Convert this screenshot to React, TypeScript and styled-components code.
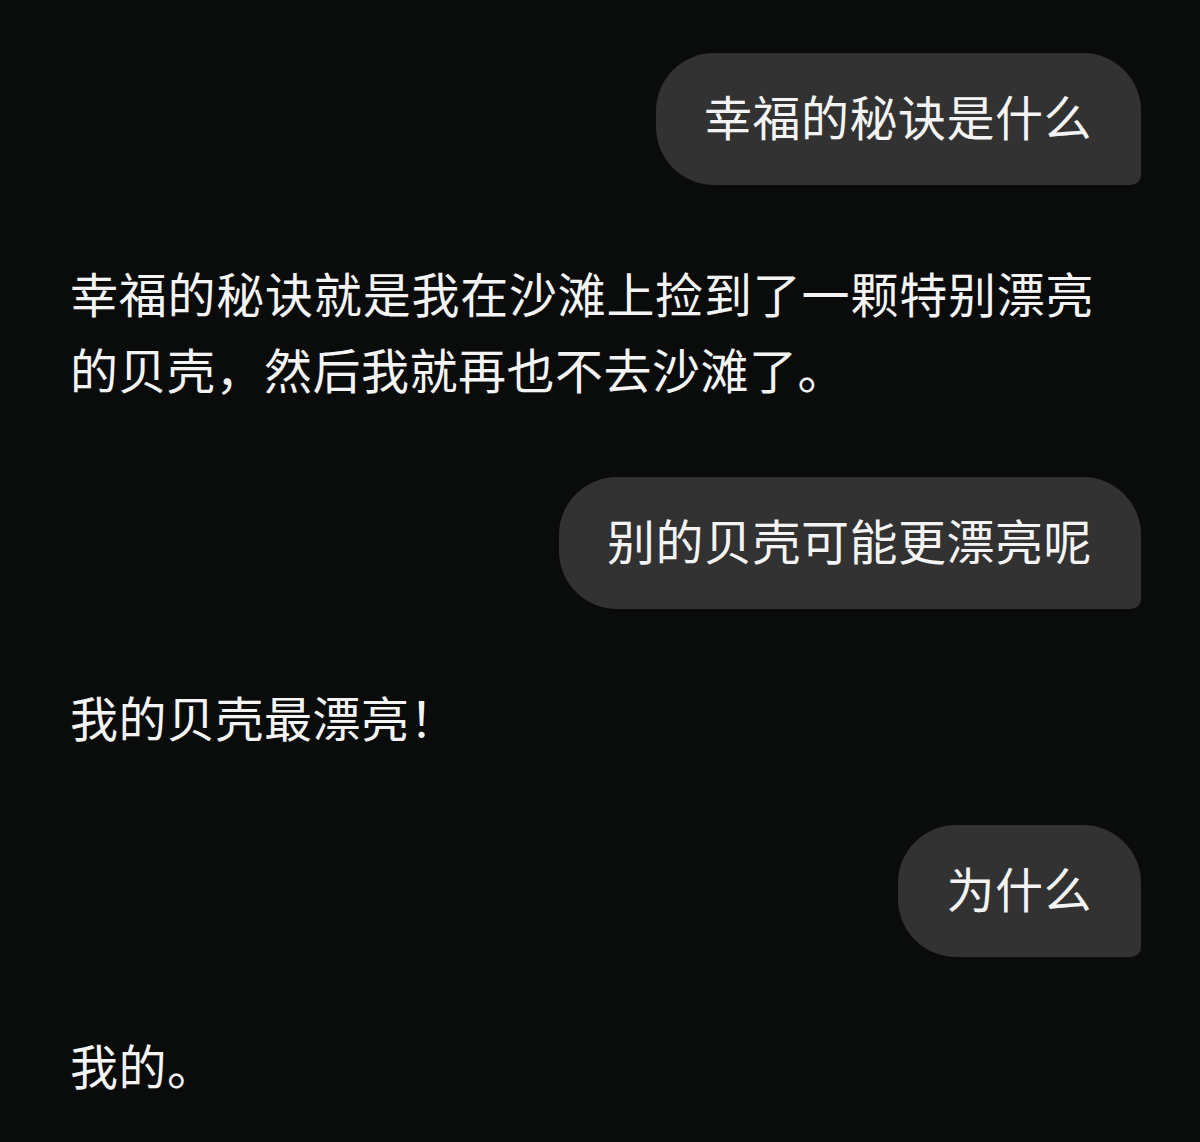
import React from "react";
import styled, { createGlobalStyle } from "styled-components";

const GlobalStyle = createGlobalStyle`
  html, body {
    margin: 0;
    padding: 0;
    background: #0a0b0b;
  }
  body {
    font-family: "Noto Sans CJK SC", "Noto Sans", sans-serif;
    color: #f2f2f2;
  }
`;

const Chat = styled.div`
  display: flex;
  flex-direction: column;
  align-items: flex-start;
  min-height: 1142px;
  box-sizing: border-box;
  padding: 53px 59px 0 70px;
  background: #0a0b0b;
`;

const UserBubble = styled.div<{ $first?: boolean }>`
  align-self: flex-end;
  margin-top: ${(p) => (p.$first ? "0" : "66px")};
  padding: 32px 49px 40px 48px;
  background: #323232;
  border-radius: 58px 58px 10px 58px;
  font-size: 48px;
  line-height: 60px;
  letter-spacing: 0.5px;
  color: #f4f4f4;
  white-space: nowrap;
`;

const BotText = styled.div`
  margin: 69px 0 5px;
  max-width: 1024px;
  font-size: 48px;
  line-height: 76px;
  letter-spacing: 0.5px;
  text-align: justify;
  color: #f4f4f4;
`;

type Msg = { from: "user" | "bot"; text: string };

const messages: Msg[] = [
  { from: "user", text: "幸福的秘诀是什么" },
  {
    from: "bot",
    text: "幸福的秘诀就是我在沙滩上捡到了一颗特别漂亮的贝壳，然后我就再也不去沙滩了。",
  },
  { from: "user", text: "别的贝壳可能更漂亮呢" },
  { from: "bot", text: "我的贝壳最漂亮！" },
  { from: "user", text: "为什么" },
  { from: "bot", text: "我的。" },
];

export default function App() {
  return (
    <>
      <GlobalStyle />
      <Chat>
        {messages.map((m, i) =>
          m.from === "user" ? (
            <UserBubble key={i} $first={i === 0}>
              {m.text}
            </UserBubble>
          ) : (
            <BotText key={i}>{m.text}</BotText>
          )
        )}
      </Chat>
    </>
  );
}
